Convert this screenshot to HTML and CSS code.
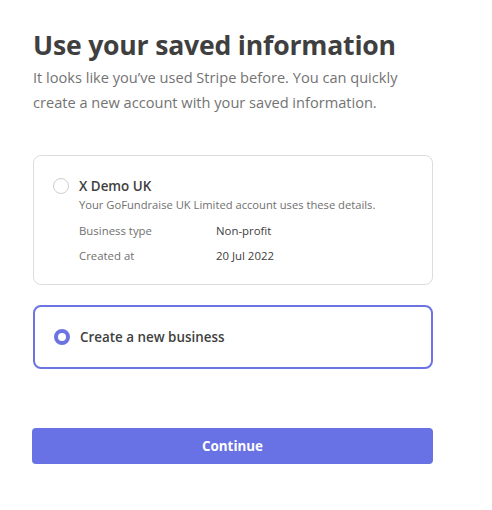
FILE: index.html
```html
<!DOCTYPE html>
<html lang="en">
<head>
    <meta charset="UTF-8">
    <meta name="viewport" content="width=device-width, initial-scale=1.0">
    <link rel="stylesheet" href="styles.css">
</head>
<body>

<div class="page">
    <h1 class="title">Use your saved information</h1>
    <p class="intro">It looks like you’ve used Stripe before. You can quickly create a new account with your saved information.</p>

    <div class="option">
        <span class="radio"></span>
        <div class="option-body">
            <div class="option-name">X Demo UK</div>
            <div class="option-desc">Your GoFundraise UK Limited account uses these details.</div>
            <div class="detail-row">
                <span class="detail-label">Business type</span>
                <span class="detail-value">Non-profit</span>
            </div>
            <div class="detail-row">
                <span class="detail-label">Created at</span>
                <span class="detail-value">20 Jul 2022</span>
            </div>
        </div>
    </div>

    <div class="option option-selected">
        <span class="radio radio-on"></span>
        <div class="option-body">
            <div class="option-name">Create a new business</div>
        </div>
    </div>

    <button class="continue">Continue</button>
</div>

</body>
</html>
```

FILE: styles.css
```css
body {
    margin: 0;
    padding: 0;
    background: #fff;
    font-family: 'Open Sans', 'Noto Sans', sans-serif;
    color: #3c3c3c;
}
.page {
    width: 400px;
    margin-left: 33px;
    padding-top: 27px;
}
.title {
    margin: 0;
    font-size: 26.6px;
    line-height: 36px;
    font-weight: 700;
    color: #3f3f3f;
    letter-spacing: -0.2px;
}
.intro {
    margin: 2px 0 0;
    font-size: 14.6px;
    line-height: 25px;
    color: #737373;
}
.option {
    display: flex;
    align-items: flex-start;
    margin-top: 40px;
    padding: 20px 18px 16px 19px;
    border: 1px solid #dcdcdc;
    border-radius: 8px;
}
.option-selected {
    margin-top: 20px;
    padding: 20px 18px 20px 19px;
    border: 2px solid #6b74e0;
}
.radio {
    flex: none;
    box-sizing: border-box;
    width: 16px;
    height: 16px;
    margin-top: 2px;
    margin-right: 10px;
    border: 1px solid #cfcfcf;
    border-radius: 50%;
}
.radio-on {
    border: 4px solid #6b74e0;
}
.option-name {
    font-size: 13.4px;
    line-height: 20px;
    font-weight: 600;
    color: #3f3f3f;
}
.option-desc {
    font-size: 11.2px;
    line-height: 18px;
    color: #707070;
    margin-bottom: 4px;
}
.detail-row {
    display: flex;
    font-size: 11.4px;
    line-height: 25px;
}
.detail-label {
    width: 137px;
    color: #707070;
}
.detail-value {
    color: #404040;
}
.continue {
    display: block;
    width: 401px;
    height: 36px;
    margin: 59px 0 0 -1px;
    border: none;
    border-radius: 4px;
    background-color: #6872e4;
    color: #fff;
    font-family: 'Open Sans', 'Noto Sans', sans-serif;
    font-size: 13.4px;
    font-weight: 700;
    cursor: pointer;
}
```
